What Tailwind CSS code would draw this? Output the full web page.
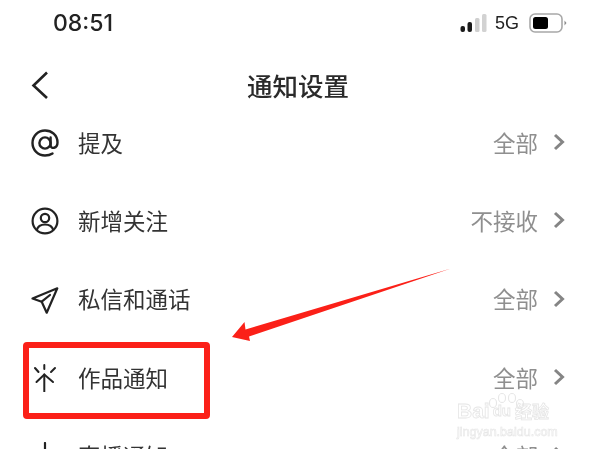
<!DOCTYPE html>
<html lang="zh">
<head>
<meta charset="utf-8">
<script src="https://cdn.jsdelivr.net/npm/@tailwindcss/browser@4"></script>
</head>
<body class="bg-white">
<div class="relative w-[596px] h-[449px] overflow-hidden bg-white blur-[0.4px] font-['Noto_Sans_CJK_SC','Noto_Sans',sans-serif] text-[#333]">
  <!-- status bar -->
  <div class="h-[46px] flex items-center pl-[53px] pr-[29px] justify-between">
    <span class="font-['Inter',sans-serif] text-[23px] leading-none font-medium text-[#222]">08:51</span>
    <div class="flex items-center">
      <svg width="27" height="18" viewBox="0 0 27 18" class="mr-[8px]">
        <rect x="0.5" y="12" width="4.5" height="6" rx="2" fill="#1a1a1a"/>
        <rect x="7.5" y="8" width="4.5" height="10" rx="2" fill="#1a1a1a"/>
        <rect x="15" y="4" width="4.5" height="14" rx="1.5" fill="#cfcfcf"/>
        <rect x="22" y="0" width="4.5" height="18" rx="1.5" fill="#d2d2d2"/>
      </svg>
      <span class="font-['Liberation_Sans',sans-serif] text-[18px] leading-none text-[#222] mr-[10px]">5G</span>
      <svg width="38" height="20" viewBox="0 0 38 20">
        <rect x="1" y="1" width="32" height="18" rx="5" fill="none" stroke="#a8a8a8" stroke-width="1.6"/>
        <rect x="4" y="4" width="15" height="12" rx="2.5" fill="#000"/>
        <path d="M35.5 7.5 L37.5 10 L35.5 12.5Z" fill="#8a8a8a"/>
      </svg>
    </div>
  </div>
  <!-- nav -->
  <div class="relative mt-[21px] h-[36px] flex items-center justify-center">
    <svg class="absolute left-[30px] top-[3px]" width="20" height="30" viewBox="0 0 20 30" fill="none"><path d="M17 2.5 L3.5 15.5 L17 28" stroke="#222" stroke-width="2.6"/></svg>
    <span class="text-[25.5px] leading-none text-[#2a2a2a] font-medium">通知设置</span>
  </div>
  <!-- rows -->
  <div class="flex flex-col">
    <div class="h-[78.3px] flex items-center pl-[31px] pr-[31px]">
      <svg class="translate-y-px" width="28" height="28" viewBox="0 0 28 28" fill="none" stroke="#222" stroke-width="2.4" stroke-linecap="round"><circle cx="14" cy="14" r="5.6"/><path d="M19.6 8.5 V16.5 C19.6 20 26.5 20 26.5 13.5 C26.5 6 20.5 1.5 14 1.5 C7 1.5 1.5 7 1.5 14 C1.5 21 7 26.5 14 26.5 C17 26.5 19.5 25.8 21.5 24.5"/></svg>
      <span class="ml-[19px] text-[22.5px] leading-none">提及</span>
      <span class="ml-auto text-[22.5px] leading-none text-[#8f8f8f]">全部</span>
      <svg class="ml-[15px]" width="12" height="18" viewBox="0 0 12 18" fill="none"><path d="M2 2 L9.5 9 L2 16" stroke="#858585" stroke-width="3"/></svg>
    </div>
    <div class="h-[78.3px] flex items-center pl-[31px] pr-[31px]">
      <svg class="translate-y-px" width="28" height="28" viewBox="0 0 28 28" fill="none" stroke="#222" stroke-width="2.2"><circle cx="14" cy="14" r="12.4"/><circle cx="14" cy="11" r="4.2"/><path d="M5.8 23 C7 18.5 10 17.5 14 17.5 C18 17.5 21 18.5 22.2 23"/></svg>
      <span class="ml-[19px] text-[22.5px] leading-none">新增关注</span>
      <span class="ml-auto text-[22.5px] leading-none text-[#8f8f8f]">不接收</span>
      <svg class="ml-[15px]" width="12" height="18" viewBox="0 0 12 18" fill="none"><path d="M2 2 L9.5 9 L2 16" stroke="#858585" stroke-width="3"/></svg>
    </div>
    <div class="h-[78.3px] flex items-center pl-[31px] pr-[31px]">
      <svg class="translate-y-px" width="28" height="28" viewBox="0 0 28 28" fill="none" stroke="#222" stroke-width="2.2" stroke-linejoin="round" stroke-linecap="round"><path d="M1.5 12.5 L26.3 2.3 L15.7 26.7 L10.7 15.7 Z"/><path d="M10.7 15.7 L19 9"/></svg>
      <span class="ml-[19px] text-[22.5px] leading-none">私信和通话</span>
      <span class="ml-auto text-[22.5px] leading-none text-[#8f8f8f]">全部</span>
      <svg class="ml-[15px]" width="12" height="18" viewBox="0 0 12 18" fill="none"><path d="M2 2 L9.5 9 L2 16" stroke="#858585" stroke-width="3"/></svg>
    </div>
    <div class="h-[78.3px] flex items-center pl-[31px] pr-[31px]">
      <svg class="translate-y-px" width="28" height="28" viewBox="0 0 28 28" fill="none" stroke="#222" stroke-width="2" stroke-linecap="round"><path d="M13.3 10.5 V27.5"/><path d="M5.5 18 L13.3 10.5 L22 18"/><path d="M13.3 1 V5"/><path d="M4 4 L7.5 8"/><path d="M24 4 L20 8"/></svg>
      <span class="ml-[19px] text-[22.5px] leading-none">作品通知</span>
      <span class="ml-auto text-[22.5px] leading-none text-[#8f8f8f]">全部</span>
      <svg class="ml-[15px]" width="12" height="18" viewBox="0 0 12 18" fill="none"><path d="M2 2 L9.5 9 L2 16" stroke="#858585" stroke-width="3"/></svg>
    </div>
    <div class="h-[78.3px] flex items-center pl-[31px] pr-[31px]">
      <svg class="translate-y-px" width="28" height="28" viewBox="0 0 28 28" fill="none" stroke="#222" stroke-width="2.2" stroke-linecap="round"><path d="M14 1 V27"/><path d="M3 10 H25"/></svg>
      <span class="ml-[19px] text-[22.5px] leading-none">直播通知</span>
      <span class="ml-auto text-[22.5px] leading-none text-[#8f8f8f]">全部</span>
      <svg class="ml-[15px]" width="12" height="18" viewBox="0 0 12 18" fill="none"><path d="M2 2 L9.5 9 L2 16" stroke="#858585" stroke-width="3"/></svg>
    </div>
  </div>
  <!-- annotation: red box -->
  <div class="absolute left-[23px] top-[342px] w-[187px] h-[77px] border-[6.5px] border-[#fb2018] rounded-[4px]"></div>
  <!-- annotation: arrow -->
  <svg class="absolute left-0 top-0" width="596" height="449" viewBox="0 0 596 449">
    <path d="M232 337 L244.5 322 L245.5 329.5 L451 268.5 L249 336.5 L250 341 Z" fill="#fb2018"/>
  </svg>
  <!-- watermark -->
  <div class="absolute left-[457px] top-[395px] w-[108px]">
    <svg class="absolute left-[30px] top-[-2px]" width="38" height="32" viewBox="0 0 38 32" fill="none" stroke="#e6e6e6" stroke-width="1"><ellipse cx="6" cy="10" rx="3.5" ry="4.5"/><ellipse cx="15" cy="5" rx="3.5" ry="4.5"/><ellipse cx="25" cy="5" rx="3.5" ry="4.5"/><ellipse cx="33" cy="11" rx="3.5" ry="4.5"/></svg>
    <div class="flex items-center h-[30px] font-['Liberation_Sans',sans-serif] text-[21px] font-bold leading-none text-white [-webkit-text-stroke:0.8px_#e6e6e6]">
      <span>Bai</span><span class="ml-[3px] text-[15px]">du</span><span class="ml-[4px] text-[17px] font-['Noto_Sans_CJK_SC',sans-serif]">经验</span>
    </div>
    <div class="mt-[1px] font-['Liberation_Sans',sans-serif] text-[12.5px] leading-none text-white [-webkit-text-stroke:0.6px_#e6e6e6] whitespace-nowrap">jingyan.baidu.com</div>
  </div>
</div>
</body>
</html>
